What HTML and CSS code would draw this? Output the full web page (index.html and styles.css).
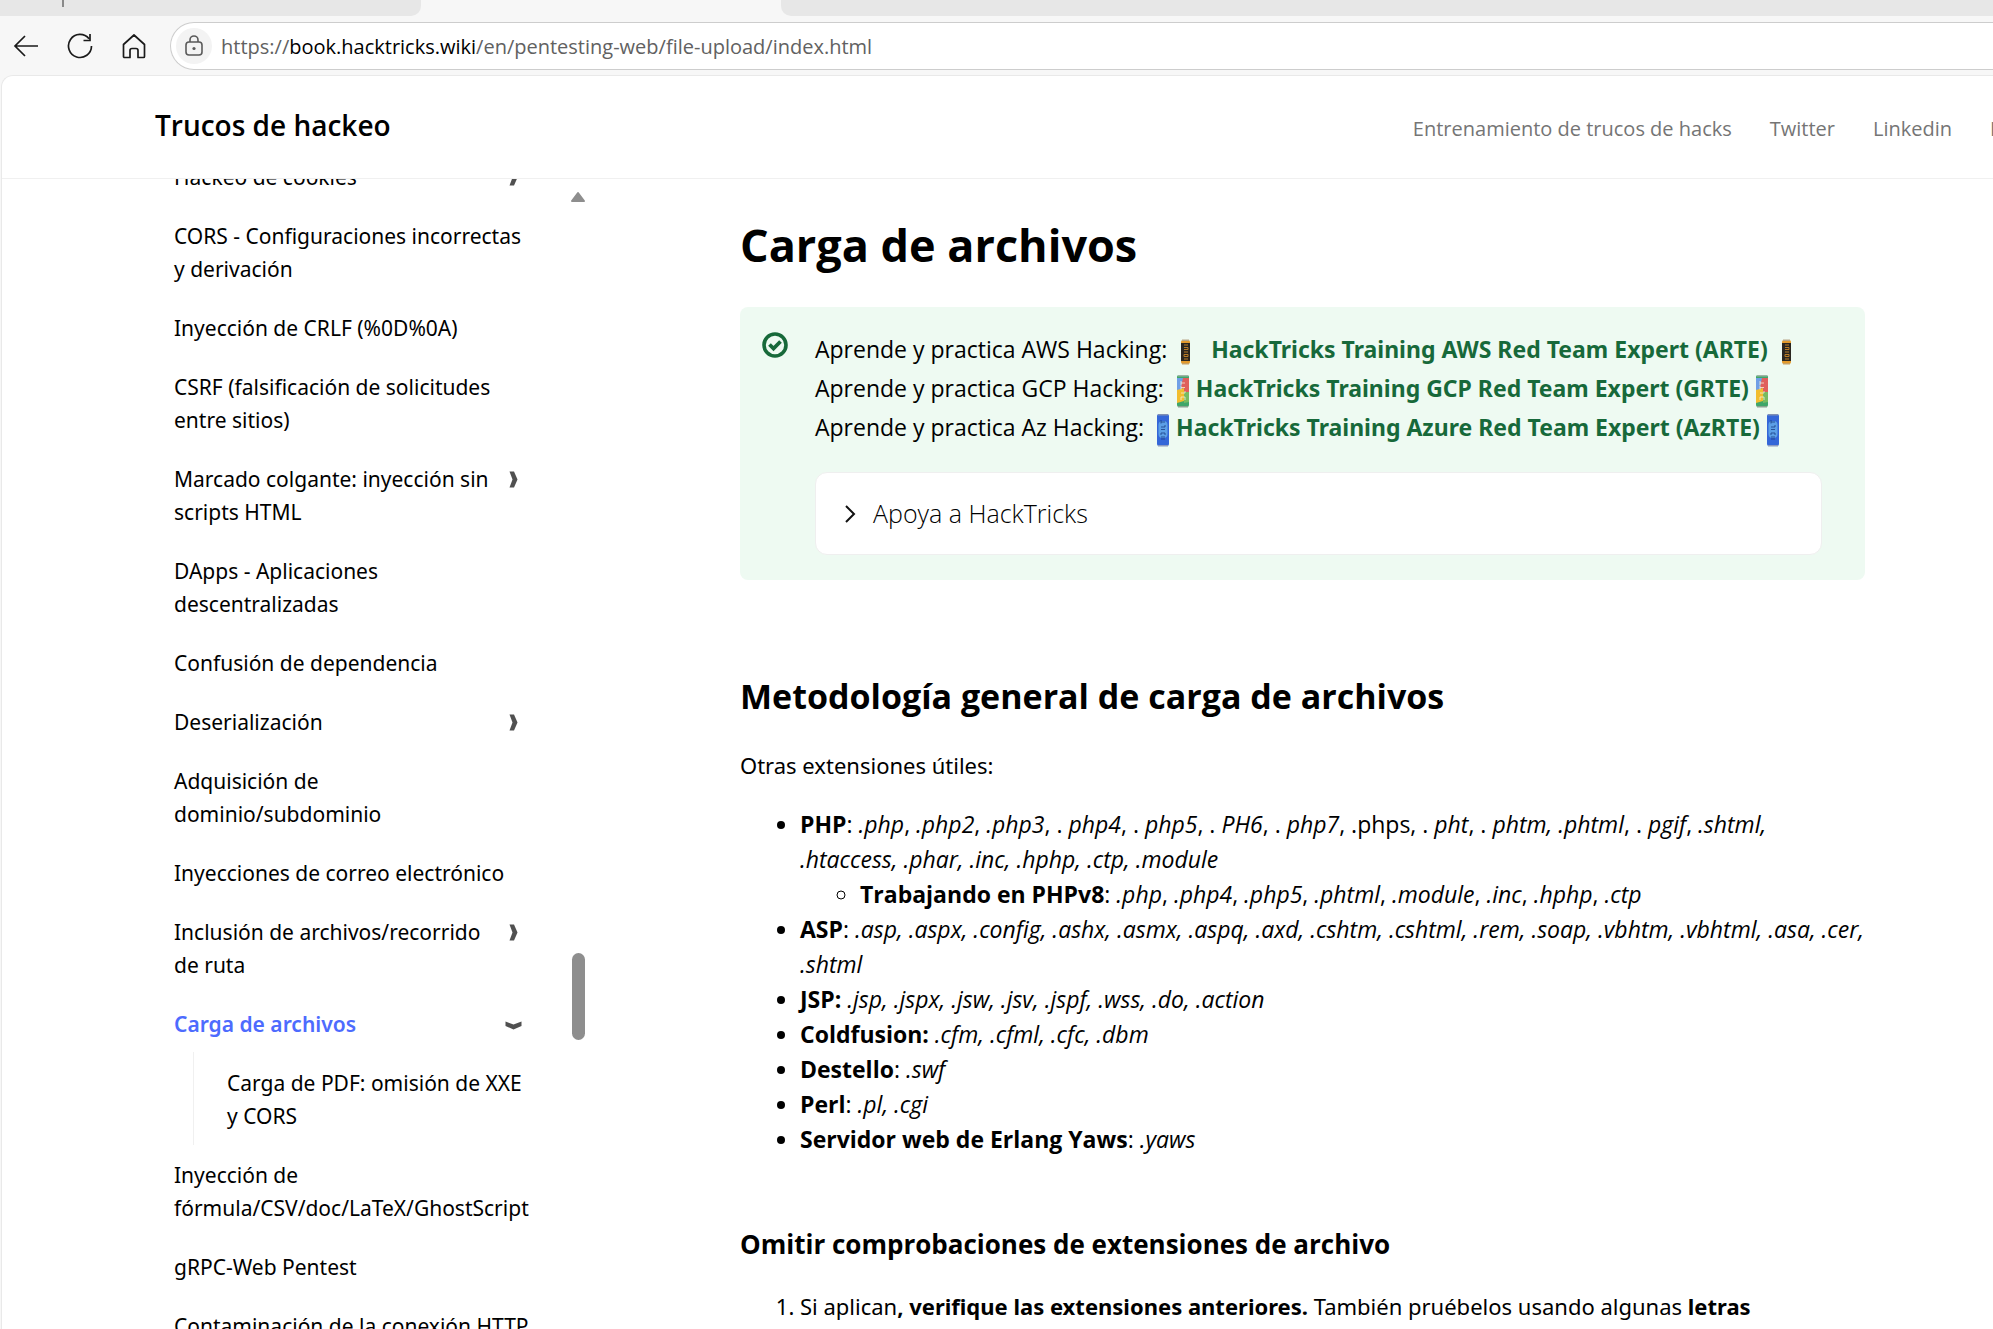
FILE: index.html
```html
<!DOCTYPE html>
<html lang="es">
<head>
<meta charset="utf-8">
<title>Carga de archivos - Trucos de hackeo</title>
<link rel="stylesheet" href="styles.css">
</head>
<body>
<svg class="defs" width="0" height="0" aria-hidden="true">
  <symbol id="can-aws" viewBox="0 0 26 36">
    <rect x="8" y="6" width="9" height="24" rx="2" fill="#e39a2c"/>
    <rect x="8" y="9" width="9" height="18" fill="#2b2620"/>
    <path d="M11 25h4M11 22.500h4v-2h-4zM11 18h4M11 15.500h4v-2h-4M11 11h4" stroke="#b97c26" fill="none"/>
    <rect x="9" y="5.500" width="7" height="1.500" fill="#b9a88a"/>
    <rect x="9" y="29" width="7" height="1.500" fill="#c9a060"/>
  </symbol>
  <symbol id="can-gcp" viewBox="0 0 26 36">
    <rect x="7" y="2" width="12" height="32" rx="2" fill="#3fa66a"/>
    <rect x="7" y="5" width="6" height="14" fill="#6f9fe6"/>
    <path d="M13 5h6v14h-5l-3-5z" fill="#e0605c"/>
    <path d="M7 17l7-2v13l-7 2z" fill="#f2bd2e"/>
    <path d="M14 19h5v10l-5 1z" fill="#77bb62"/>
    <path d="M11 27v-3h4v3M11 20h4v-2M11 14.500h4M11 12.500v4M11 10h4M11 8v4" stroke="#f3efd8" stroke-opacity="0.800" fill="none"/>
    <rect x="8" y="2" width="10" height="1.500" fill="#9fb5a5"/>
    <rect x="8" y="33" width="10" height="1.500" fill="#8aa391"/>
  </symbol>
  <symbol id="can-az" viewBox="0 0 26 36">
    <rect x="7" y="2" width="12" height="32" rx="2" fill="#3466d8"/>
    <rect x="8.500" y="9" width="9" height="17" rx="4" fill="#5c9fe6"/>
    <path d="M11 27h4M11 25h4M11 23v-2h4v2M11 17.500h4M11 15h4v-2M11 10h4M11 8v3.500" stroke="#1d3f86" stroke-opacity="0.800" fill="none"/>
    <rect x="8" y="2" width="10" height="1.500" fill="#7f8fb4"/>
    <rect x="8" y="33" width="10" height="1.500" fill="#8c9ac0"/>
  </symbol>
  <symbol id="chevron" viewBox="0 0 18 18">
    <path d="M5.500 0.500h4.500l3.500 8-3.500 8H5.500l3-8z" fill="#505050"/>
  </symbol>
</svg>

<div class="tabs"><div class="tab tab-left"></div><div class="tab-active"></div><div class="tab tab-right"></div></div>
<div class="toolbar">
  <div class="tools">
    <button class="tool" type="button" aria-label="Atrás"><svg width="26" height="24" viewBox="0 0 26 24"><path d="M25 12H2M12 2L2 12l10 10" fill="none" stroke="#1a1a1a" stroke-width="1.700"/></svg></button>
    <button class="tool" type="button" aria-label="Actualizar"><svg width="26" height="26" viewBox="0 0 26 26"><path d="M24.500 13A11.500 11.500 0 1 1 22 5.800M23 1v6.500h-6.500" fill="none" stroke="#1a1a1a" stroke-width="1.700"/></svg></button>
    <button class="tool" type="button" aria-label="Inicio"><svg width="24" height="26" viewBox="0 0 24 26"><path d="M1.500 11.500L12 2l10.500 9.500v12a1 1 0 0 1-1 1H16v-7a2 2 0 0 0-2-2h-4a2 2 0 0 0-2 2v7H2.500a1 1 0 0 1-1-1z" fill="none" stroke="#1a1a1a" stroke-width="1.700" stroke-linejoin="round"/></svg></button>
  </div>
  <div class="address">
    <button class="lock" type="button" aria-label="Información del sitio"><svg width="20" height="22" viewBox="0 0 20 22"><rect x="2" y="7" width="16" height="13" rx="3" fill="none" stroke="#5a5a5a" stroke-width="1.600"/><path d="M6 7V5a4 4 0 0 1 8 0v2" fill="none" stroke="#5a5a5a" stroke-width="1.600"/><circle cx="10" cy="13.500" r="1.600" fill="#5a5a5a"/></svg></button>
    <div class="url" role="textbox" aria-label="Dirección">https://<span class="domain">book.hacktricks.wiki</span>/en/pentesting-web/file-upload/index.html</div>
  </div>
</div>

<div class="page">
  <header class="header">
    <a class="brand" href="#">Trucos de hackeo</a>
    <nav class="links">
      <a href="#">Entrenamiento de trucos de hacks</a>
      <a href="#">Twitter</a>
      <a href="#">Linkedin</a>
      <a href="#">Patrocinador</a>
    </nav>
  </header>
  <div class="body">
    <aside class="sidebar">
      <ul class="toc">
        <li><a href="#">Hackeo de cookies</a><svg class="fold"><use href="#chevron"/></svg></li>
        <li><a href="#">CORS - Configuraciones incorrectas y derivación</a></li>
        <li><a href="#">Inyección de CRLF (%0D%0A)</a></li>
        <li><a href="#">CSRF (falsificación de solicitudes entre sitios)</a></li>
        <li><a href="#">Marcado colgante: inyección sin scripts HTML</a><svg class="fold"><use href="#chevron"/></svg></li>
        <li><a href="#">DApps - Aplicaciones descentralizadas</a></li>
        <li><a href="#">Confusión de dependencia</a></li>
        <li><a href="#">Deserialización</a><svg class="fold"><use href="#chevron"/></svg></li>
        <li><a href="#">Adquisición de dominio/subdominio</a></li>
        <li><a href="#">Inyecciones de correo electrónico</a></li>
        <li><a href="#">Inclusión de archivos/recorrido de ruta</a><svg class="fold"><use href="#chevron"/></svg></li>
        <li><a class="active" href="#">Carga de archivos</a><svg class="fold open"><use href="#chevron"/></svg></li>
        <li class="nested"><a href="#">Carga de PDF: omisión de XXE y CORS</a></li>
        <li><a href="#">Inyección de fórmula/CSV/doc/LaTeX/GhostScript</a></li>
        <li><a href="#">gRPC-Web Pentest</a></li>
        <li><a href="#">Contaminación de la conexión HTTP</a></li>
      </ul>
      <div class="scrollbar">
        <svg width="16" height="12" viewBox="0 0 16 12"><path d="M8 2L14 10H2z" fill="#8e8e8e" stroke="#8e8e8e" stroke-width="2" stroke-linejoin="round"/></svg>
        <div class="thumb"></div>
      </div>
    </aside>
    <main class="content">
      <h1>Carga de archivos</h1>
      <section class="tip">
        <svg class="check" width="26" height="26" viewBox="0 0 26 26"><circle cx="13" cy="13" r="11" fill="none" stroke="#17693a" stroke-width="3.600"/><path d="M7.500 12.500l4 4 7-7" fill="none" stroke="#17693a" stroke-width="3.800"/></svg>
        <div class="tip-body">
          <p>Aprende y practica AWS Hacking: <svg class="can"><use href="#can-aws"/></svg>&nbsp; <a href="#">HackTricks Training AWS Red Team Expert (ARTE)</a> <svg class="can"><use href="#can-aws"/></svg><br>
          Aprende y practica GCP Hacking: <svg class="can"><use href="#can-gcp"/></svg><a href="#">HackTricks Training GCP Red Team Expert (GRTE)</a><svg class="can"><use href="#can-gcp"/></svg><br>
          Aprende y practica Az Hacking: <svg class="can"><use href="#can-az"/></svg><a href="#">HackTricks Training Azure Red Team Expert (AzRTE)</a><svg class="can"><use href="#can-az"/></svg></p>
          <details>
            <summary><svg width="12" height="20" viewBox="0 0 12 20"><path d="M2 2l8 8-8 8" fill="none" stroke="#111" stroke-width="2"/></svg>Apoya a HackTricks</summary>
          </details>
        </div>
      </section>
      <h2>Metodología general de carga de archivos</h2>
      <p>Otras extensiones útiles:</p>
      <ul>
        <li><b>PHP</b>: <i>.php</i>, <i>.php2</i>, <i>.php3</i>, . <i>php4</i>, . <i>php5</i>, . <i>PH6</i>, . <i>php7</i>, .phps, . <i>pht</i>, . <i>phtm, .phtml</i>, . <i>pgif</i>, <i>.shtml, .htaccess, .phar, .inc, .hphp, .ctp, .module</i>
          <ul>
            <li><b>Trabajando en PHPv8</b>: <i>.php</i>, <i>.php4</i>, <i>.php5</i>, <i>.phtml</i>, <i>.module</i>, <i>.inc</i>, <i>.hphp</i>, <i>.ctp</i></li>
          </ul>
        </li>
        <li><b>ASP</b>: <i>.asp, .aspx, .config, .ashx, .asmx, .aspq, .axd, .cshtm, .cshtml, .rem, .soap, .vbhtm, .vbhtml, .asa, .cer, .shtml</i></li>
        <li><b>JSP:</b> <i>.jsp, .jspx, .jsw, .jsv, .jspf, .wss, .do, .action</i></li>
        <li><b>Coldfusion:</b> <i>.cfm, .cfml, .cfc, .dbm</i></li>
        <li><b>Destello</b>: <i>.swf</i></li>
        <li><b>Perl</b>: <i>.pl, .cgi</i></li>
        <li><b>Servidor web de Erlang Yaws</b>: <i>.yaws</i></li>
      </ul>
      <h3>Omitir comprobaciones de extensiones de archivo</h3>
      <ol>
        <li>Si aplican<b>, verifique las extensiones anteriores.</b> También pruébelos usando algunas <b>letras</b></li>
      </ol>
    </main>
  </div>
</div>
</body>
</html>
```
FILE: styles.css
```css
* { box-sizing: border-box; }

body {
  margin: 0;
  height: 100vh;
  overflow: hidden;
  display: flex;
  flex-direction: column;
  background: #f7f7f7;
  color: #000;
  font-family: "Open Sans", "Noto Sans", sans-serif;
  font-size: 22px;
}

a { color: inherit; text-decoration: none; }
button { border: 0; padding: 0; background: none; display: flex; align-items: center; justify-content: center; }
.defs { position: absolute; }

/* Browser chrome */
.tabs { display: flex; flex: none; height: 16px; }
.tab { background: #e7e7e7; }
.tab-left { width: 421px; border-bottom-right-radius: 10px; }
.tab-left::before { content: ""; display: block; width: 2px; height: 7px; margin-left: 62px; background: #8a8a8a; }
.tab-active { width: 360px; }
.tab-right { flex: 1; border-bottom-left-radius: 10px; }

.toolbar { display: flex; flex: none; align-items: center; height: 59px; padding-left: 12px; gap: 22px; }
.tools { display: flex; gap: 26px; }
.tool { width: 28px; height: 36px; }
.address {
  flex: 1;
  display: flex;
  align-items: center;
  gap: 9px;
  height: 48px;
  padding-left: 5px;
  background: #fff;
  border: 1px solid #cdcdcd;
  border-right: 0;
  border-radius: 24px 0 0 24px;
}
.lock { width: 36px; height: 36px; border-radius: 50%; background: #f3f3f3; }
.url { padding-top: 2px; font-size: 20px; color: #616161; white-space: nowrap; }
.domain { color: #000; }

/* Page */
.page {
  flex: 1;
  min-height: 0;
  display: flex;
  flex-direction: column;
  margin-left: 1px;
  background: #fff;
  border: solid #e9e9e9;
  border-width: 1px 0 0 1px;
  border-top-left-radius: 12px;
  overflow: hidden;
}
.header {
  flex: none;
  display: flex;
  align-items: center;
  justify-content: space-between;
  height: 103px;
  padding-left: 153px;
  border-bottom: 1px solid #f0f0f0;
}
.brand { padding-bottom: 4px; font-size: 28px; font-weight: 600; }
.links { display: flex; gap: 38px; margin-right: -118px; padding-top: 2px; font-size: 20px; color: #757575; white-space: nowrap; }

.body { flex: 1; min-height: 0; display: flex; }
.sidebar { flex: none; width: 584px; display: flex; overflow: hidden; }
.toc {
  flex: 1;
  min-width: 0;
  margin: -18px 0 0;
  padding: 0 40px 0 172px;
  list-style: none;
  font-family: "Noto Sans", sans-serif;
  font-size: 21px;
  line-height: 33px;
}
.toc li { display: flex; align-items: flex-start; justify-content: space-between; margin-bottom: 26px; }
.fold { flex: none; width: 18px; height: 18px; margin: 8px 8px 0 6px; }
.open { transform: rotate(90deg); }
.active { color: #4d6bfe; font-weight: 600; }
.toc .nested { margin: -15px 0 14px 19px; padding: 15px 0 12px 33px; border-left: 1px solid #f0f0f0; }
.scrollbar { flex: none; display: flex; flex-direction: column; align-items: center; width: 16px; padding-top: 12px; }
.thumb { width: 13px; height: 87px; margin-top: 750px; border-radius: 7px; background: #8e8e8e; }

/* Article */
.content { flex: 1; max-width: 1281px; padding: 30px 2px 0 154px; line-height: 35px; font-family: "Noto Sans", sans-serif; }
h1, h2, h3 { margin: 0; font-family: "Open Sans", sans-serif; font-weight: 700; }
h1 { font-size: 45px; line-height: 72px; }
h2 { margin-top: 91px; font-size: 34px; line-height: 50px; }
h3 { margin-top: 67px; font-size: 26px; line-height: 40px; }
.content p { margin: 27px 0 24px; }
.content ul, .content ol { margin: 0; padding-left: 60px; }
.content ul { font-family: "Open Sans", sans-serif; font-size: 23px; }
.content ol { margin-top: 25px; }

.tip { display: flex; gap: 27px; margin-top: 26px; padding: 23px 43px 25px 22px; background: #eefaf2; border-radius: 8px; }
.check { flex: none; margin-top: 2px; }
.tip-body { flex: 1; font-family: "Open Sans", sans-serif; font-size: 23px; }
.tip .tip-body p { margin: 0 0 25px; line-height: 39px; white-space: nowrap; }
.tip a { color: #17693a; font-family: "Noto Sans", sans-serif; font-weight: 700; }
.can { width: 26px; height: 36px; margin: -6px 0; vertical-align: middle; }
details { background: #fff; border: 1px solid #efefef; border-radius: 12px; }
summary { display: flex; align-items: center; gap: 17px; height: 81px; padding-left: 28px; font-size: 25px; font-weight: 300; }
```
